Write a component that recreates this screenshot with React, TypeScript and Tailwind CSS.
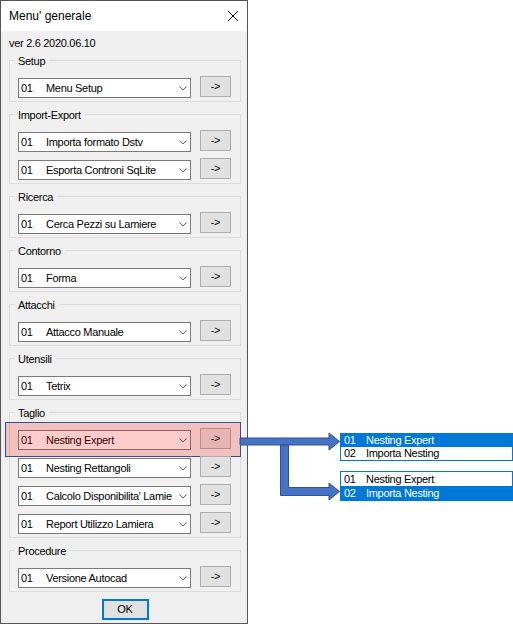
import React from 'react';

type Group = { title: string; items: string[] };

const groups: Group[] = [
  { title: 'Setup', items: ['Menu Setup'] },
  { title: 'Import-Export', items: ['Importa formato Dstv', 'Esporta Controni SqLite'] },
  { title: 'Ricerca', items: ['Cerca Pezzi su Lamiere'] },
  { title: 'Contorno', items: ['Forma'] },
  { title: 'Attacchi', items: ['Attacco Manuale'] },
  { title: 'Utensili', items: ['Tetrix'] },
  {
    title: 'Taglio',
    items: ['Nesting Expert', 'Nesting Rettangoli', "Calcolo Disponibilita' Lamie", 'Report Utilizzo Lamiera'],
  },
  { title: 'Procedure', items: ['Versione Autocad'] },
];

function Chevron() {
  return (
    <svg width="8" height="5" viewBox="0 0 8 5" className="block">
      <path d="M0.5 0.5 L4 4 L7.5 0.5" fill="none" stroke="#606060" strokeWidth="1" />
    </svg>
  );
}

function Combo({ item }: { item: string }) {
  return (
    <div className="flex h-[20px] w-[173px] shrink-0 items-center border border-[#7a7a7a] bg-white">
      <div className="flex min-w-0 flex-1 whitespace-nowrap pl-[2px] leading-[18px]">
        <span className="w-[25px] shrink-0">01</span>
        <span>{item}</span>
      </div>
      <div className="flex w-[15px] shrink-0 items-center justify-center pt-[1px]">
        <Chevron />
      </div>
    </div>
  );
}

function Row({ item, marked }: { item: string; marked?: boolean }) {
  return (
    <div className="relative flex items-start gap-[9px]">
      <Combo item={item} />
      <button className="-mt-[2px] h-[21px] w-[31px] border border-[#adadad] bg-[#e1e1e1] leading-[19px]">
        -&gt;
      </button>
      {/* evidenziazione riga */}
      {marked && (
        <div className="absolute -left-[13px] -top-[8px] h-[35px] w-[236px] border border-[#2f528f] bg-[#ff0000]/20" />
      )}
    </div>
  );
}

function GroupBox({ group }: { group: Group }) {
  return (
    <div className="relative flex w-[232px] flex-col gap-[8px] border border-[#dcdcdc] pb-[3px] pl-[8px] pt-[17px]">
      <span className="absolute -top-[6px] left-[5px] bg-[#f0f0f0] pl-[3px] pr-[4px] leading-[13px]">
        {group.title}
      </span>
      {group.items.map((it, i) => (
        <Row key={it} item={it} marked={group.title === 'Taglio' && i === 0} />
      ))}
    </div>
  );
}

function DropList({ selected, tall, className }: { selected: number; tall?: boolean; className: string }) {
  const rows = ['Nesting Expert', 'Importa Nesting'];
  return (
    <div className={`absolute w-[173px] border border-[#0078d7] bg-white ${className}`}>
      {rows.map((r, i) => (
        <div
          key={r}
          className={`flex whitespace-nowrap pl-[3px] ${tall ? 'h-[14px] leading-[14px]' : 'h-[13px] leading-[13px]'} ${
            i === selected ? 'bg-[#0078d7] text-white' : 'text-black'
          }`}
        >
          <span className="w-[22px] shrink-0">0{i + 1}</span>
          <span>{r}</span>
        </div>
      ))}
    </div>
  );
}

export default function App() {
  return (
    <div className="relative h-[627px] w-[513px] overflow-hidden bg-white font-['Liberation_Sans',Arial,sans-serif] text-[11px] tracking-[-0.3px] text-black">
      <div className="flex h-[624px] w-[248px] flex-col border border-[#555555] bg-[#f0f0f0]">
        {/* title bar */}
        <div className="flex h-[30px] shrink-0 items-center justify-between bg-white pl-[8px] pr-[9px]">
          <span className="text-[12px] tracking-normal">Menu' generale</span>
          <svg width="10" height="10" viewBox="0 0 10 10" className="block">
            <path d="M0 0 L10 10 M10 0 L0 10" stroke="#000" strokeWidth="1" />
          </svg>
        </div>

        <div className="flex flex-1 flex-col pl-[8px] pt-[6px]">
          <div className="leading-[13px]">ver 2.6 2020.06.10</div>
          <div className="mt-[10px] flex flex-col gap-[12px]">
            {groups.map((g) => (
              <GroupBox key={g.title} group={g} />
            ))}
          </div>
          <div className="mt-[7px] flex w-[232px] justify-center">
            <button className="h-[21px] w-[47px] border-2 border-[#0078d7] bg-[#e1e1e1] leading-[17px]">OK</button>
          </div>
        </div>
      </div>

      {/* frecce */}
      <svg width="513" height="627" viewBox="0 0 513 627" className="pointer-events-none absolute left-0 top-0">
        <polygon
          points="240,438 329,438 329,433 339.5,441.5 329,450 329,445 240,445"
          fill="#4472c4"
          stroke="#2f528f"
          strokeWidth="1"
        />
        <polygon
          points="280.5,445 288.5,445 288.5,487.5 329,487.5 329,483 339.5,491.5 329,500 329,495.5 280.5,495.5"
          fill="#4472c4"
          stroke="#2f528f"
          strokeWidth="1"
        />
      </svg>

      <DropList selected={0} className="left-[340px] top-[433px]" />
      <DropList selected={1} tall className="left-[340px] top-[471px]" />
    </div>
  );
}
